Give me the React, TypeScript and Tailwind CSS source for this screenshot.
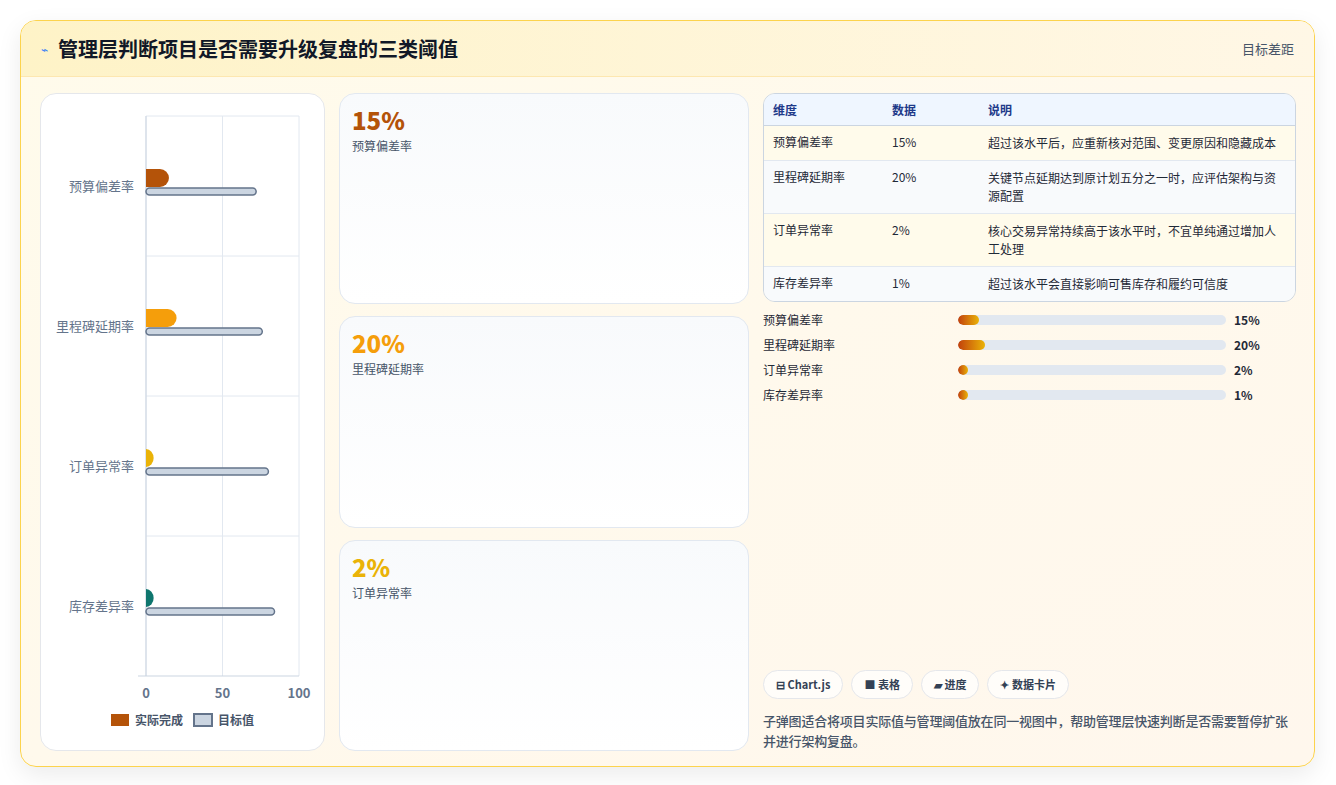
import React from "react";

const F = { fontFamily: '"Noto Sans CJK SC", "Noto Sans", sans-serif' };

const cats = [
  { n: "预算偏差率", a: 15, t: 72, c: "#b45309" },
  { n: "里程碑延期率", a: 20, t: 76, c: "#f59e0b" },
  { n: "订单异常率", a: 5, t: 80, c: "#eab308" },
  { n: "库存差异率", a: 5, t: 84, c: "#0f766e" },
];

function Chart() {
  const x0 = 105, w = 153, y0 = 22, h = 140;
  return (
    <svg width="284" height="656" className="block">
      {[0, 50, 100].map((v) => (
        <line key={v} x1={x0 + (w * v) / 100} x2={x0 + (w * v) / 100} y1={y0} y2={y0 + 4 * h} stroke="#e2e8f0" />
      ))}
      {[1, 2, 3].map((i) => (
        <line key={i} x1={x0} x2={x0 + w} y1={y0 + i * h} y2={y0 + i * h} stroke="#e2e8f0" />
      ))}
      <line x1={x0} x2={x0 + w} y1={y0} y2={y0} stroke="#e2e8f0" />
      <line x1={x0 - 8} x2={x0 + w} y1={y0 + 4 * h} y2={y0 + 4 * h} stroke="#cbd5e1" />
      <line x1={x0} x2={x0} y1={y0} y2={y0 + 4 * h} stroke="#cbd5e1" />
      {cats.map((c, i) => {
        const cy = y0 + i * h + h / 2;
        const aw = (w * c.a) / 100;
        const tw = (w * c.t) / 100;
        const r = Math.min(9, aw);
        return (
          <g key={c.n}>
            <text x={x0 - 12} y={cy + 5} textAnchor="end" fontSize="13" fill="#64748b" style={F}>{c.n}</text>
            <path d={`M${x0} ${cy - 17} H${x0 + aw - r} A${r} 9 0 0 1 ${x0 + aw - r} ${cy + 1} H${x0} Z`} fill={c.c} />
            <rect x={x0} y={cy + 2} width={tw} height={7} rx={3.5} fill="#cbd5e1" stroke="#64748b" strokeWidth="1.5" />
          </g>
        );
      })}
      {[0, 50, 100].map((v) => (
        <text key={v} x={x0 + (w * v) / 100} y={y0 + 4 * h + 22} textAnchor="middle" fontSize="13" fontWeight="600" fill="#64748b" style={F}>{v}</text>
      ))}
      <rect x="70" y="620" width="18" height="12" fill="#b45309" />
      <text x="94" y="631" fontSize="12" fill="#475569" fontWeight="600" style={F}>实际完成</text>
      <rect x="153" y="620" width="18" height="12" fill="#cbd5e1" stroke="#64748b" strokeWidth="2" />
      <text x="177" y="631" fontSize="12" fill="#475569" fontWeight="600" style={F}>目标值</text>
    </svg>
  );
}

const rows = [
  ["预算偏差率", "15%", "超过该水平后，应重新核对范围、变更原因和隐藏成本"],
  ["里程碑延期率", "20%", "关键节点延期达到原计划五分之一时，应评估架构与资源配置"],
  ["订单异常率", "2%", "核心交易异常持续高于该水平时，不宜单纯通过增加人工处理"],
  ["库存差异率", "1%", "超过该水平会直接影响可售库存和履约可信度"],
];

const cards = [
  ["15%", "预算偏差率", "text-[#b45309]"],
  ["20%", "里程碑延期率", "text-[#f59e0b]"],
  ["2%", "订单异常率", "text-[#eab308]"],
];

const bars: [string, number, number][] = [
  ["预算偏差率", 15, 21],
  ["里程碑延期率", 20, 27],
  ["订单异常率", 2, 10],
  ["库存差异率", 1, 10],
];

export default function App() {
  return (
    <div style={F} className="w-[1336px] h-[785px] bg-white pt-5 pl-5">
      <div className="h-[747px] w-[1295px] rounded-2xl border border-[#fcd34d] bg-gradient-to-br from-[#fffbeb] to-[#fff7ed] shadow-[0_8px_24px_rgba(0,0,0,0.08)] overflow-hidden flex flex-col">
        <div className="h-14 shrink-0 flex items-center justify-between px-5 bg-gradient-to-r from-[#fef3c7] to-[#fff7e6] border-b border-[#fde7b0]">
          <div className="flex items-center gap-2.5">
            <span className="text-[#3b82f6] text-xs">⌁</span>
            <span className="text-[20px] font-bold text-[#111827]">管理层判断项目是否需要升级复盘的三类阈值</span>
          </div>
          <span className="text-[13px] text-[#475569]">目标差距</span>
        </div>
        <div className="flex-1 flex gap-[14px] pl-[19px] pr-[18px] pt-4 pb-[18px]">
          <div className="w-[285px] shrink-0 rounded-2xl border border-[#e5e7eb] bg-white">
            <Chart />
          </div>
          <div className="w-[410px] shrink-0 flex flex-col gap-3">
            {cards.map(([v, l, c]) => (
              <div key={l} className="flex-1 rounded-2xl border border-[#e2e8f0] bg-gradient-to-b from-[#f8fafc] to-white px-3 py-3">
                <div className={`text-[24px] font-extrabold leading-7 ${c}`}>{v}</div>
                <div className="text-xs text-[#475569] mt-1">{l}</div>
              </div>
            ))}
          </div>
          <div className="flex-1 flex flex-col">
            <div className="rounded-xl border border-[#cbd5e1] overflow-hidden text-xs text-[#1f2937]">
              <div className="flex h-[32px] items-center bg-[#eff6ff] font-semibold text-[#1e3a8a] border-b border-[#cbd5e1]">
                <div className="w-[128px] pl-[9px]">维度</div>
                <div className="w-[96px]">数据</div>
                <div className="flex-1">说明</div>
              </div>
              {rows.map((r, i) => (
                <div key={r[0]} className={`flex items-center py-[8px] ${i % 2 ? "bg-[#f8fafc]" : "bg-[#fffbeb]"} ${i < 3 ? "border-b border-[#e2e8f0]" : ""}`}>
                  <div className="w-[128px] pl-[9px] self-start">{r[0]}</div>
                  <div className="w-[96px] self-start">{r[1]}</div>
                  <div className="flex-1 pr-2 leading-[18px]">{r[2]}</div>
                </div>
              ))}
            </div>
            <div className="mt-[10px] flex flex-col gap-[9px]">
              {bars.map(([n, v, w]) => (
                <div key={n} className="flex items-center text-xs text-[#1f2937] h-4">
                  <div className="w-[195px]">{n}</div>
                  <div className="w-[268px] h-[10px] rounded-full bg-[#e2e8f0] overflow-hidden">
                    <div className="h-full rounded-full" style={{ width: `${w}px`, backgroundImage: "linear-gradient(to right,#c2410c,#eab308)" }} />
                  </div>
                  <div className="ml-2 font-bold">{v}%</div>
                </div>
              ))}
            </div>
            <div className="flex-1" />
            <div className="flex gap-2 mb-3">
              {["⊟ Chart.js", "■ 表格", "▰ 进度", "✦ 数据卡片"].map((t) => (
                <span key={t} className="h-[29px] px-3 rounded-full border border-[#e5e7eb] bg-white/70 text-[11px] font-bold text-[#334155] flex items-center">{t}</span>
              ))}
            </div>
            <div className="text-[13px] leading-[20px] text-[#475569] font-medium tracking-[-0.2px]">子弹图适合将项目实际值与管理阈值放在同一视图中，帮助管理层快速判断是否需要暂停扩张并进行架构复盘。</div>
          </div>
        </div>
      </div>
    </div>
  );
}
